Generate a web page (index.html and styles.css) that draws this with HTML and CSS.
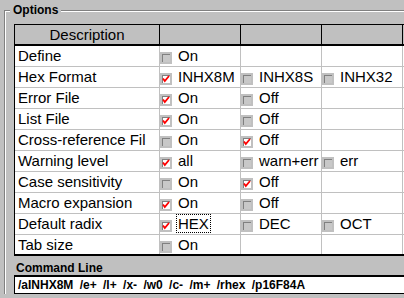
FILE: index.html
```html
<!DOCTYPE html>
<html lang="en">
<head>
    <meta charset="UTF-8">
    <title>Options</title>
    <link rel="stylesheet" href="styles.css">
</head>
<body>
    <div class="group">
        <div class="group-head"><span class="group-title">Options</span></div>
        <div class="group-body">
            <div class="grid-frame">
                <table class="grid">
                    <colgroup>
                        <col class="col-desc"><col class="col-opt"><col class="col-opt"><col class="col-opt"><col class="col-opt">
                    </colgroup>
                    <thead>
                        <tr><th>Description</th><th></th><th></th><th></th><th></th></tr>
                    </thead>
                    <tbody>
                        <tr>
                            <td>Define</td>
                            <td><i class="box"></i>On</td>
                            <td></td><td></td><td></td>
                        </tr>
                        <tr>
                            <td>Hex Format</td>
                            <td><i class="box on"><svg viewBox="0 0 8 8"><polyline points="1,3.5 2.8,6 7,1"/></svg></i>INHX8M</td>
                            <td><i class="box"></i>INHX8S</td>
                            <td><i class="box"></i>INHX32</td>
                            <td></td>
                        </tr>
                        <tr>
                            <td>Error File</td>
                            <td><i class="box on"><svg viewBox="0 0 8 8"><polyline points="1,3.5 2.8,6 7,1"/></svg></i>On</td>
                            <td><i class="box"></i>Off</td>
                            <td></td><td></td>
                        </tr>
                        <tr>
                            <td>List File</td>
                            <td><i class="box on"><svg viewBox="0 0 8 8"><polyline points="1,3.5 2.8,6 7,1"/></svg></i>On</td>
                            <td><i class="box"></i>Off</td>
                            <td></td><td></td>
                        </tr>
                        <tr>
                            <td>Cross-reference Fil</td>
                            <td><i class="box"></i>On</td>
                            <td><i class="box on"><svg viewBox="0 0 8 8"><polyline points="1,3.5 2.8,6 7,1"/></svg></i>Off</td>
                            <td></td><td></td>
                        </tr>
                        <tr>
                            <td>Warning level</td>
                            <td><i class="box on"><svg viewBox="0 0 8 8"><polyline points="1,3.5 2.8,6 7,1"/></svg></i>all</td>
                            <td><i class="box"></i>warn+err</td>
                            <td><i class="box"></i>err</td>
                            <td></td>
                        </tr>
                        <tr>
                            <td>Case sensitivity</td>
                            <td><i class="box"></i>On</td>
                            <td><i class="box on"><svg viewBox="0 0 8 8"><polyline points="1,3.5 2.8,6 7,1"/></svg></i>Off</td>
                            <td></td><td></td>
                        </tr>
                        <tr>
                            <td>Macro expansion</td>
                            <td><i class="box on"><svg viewBox="0 0 8 8"><polyline points="1,3.5 2.8,6 7,1"/></svg></i>On</td>
                            <td><i class="box"></i>Off</td>
                            <td></td><td></td>
                        </tr>
                        <tr>
                            <td>Default radix</td>
                            <td><i class="box on"><svg viewBox="0 0 8 8"><polyline points="1,3.5 2.8,6 7,1"/></svg></i><span class="focus">HEX</span></td>
                            <td><i class="box"></i>DEC</td>
                            <td><i class="box"></i>OCT</td>
                            <td></td>
                        </tr>
                        <tr>
                            <td>Tab size</td>
                            <td><i class="box"></i>On</td>
                            <td></td><td></td><td></td>
                        </tr>
                    </tbody>
                </table>
            </div>

            <div class="cmd-label">Command Line</div>
            <div class="cmd-box">/aINHX8M /e+ /l+ /x- /w0 /c- /m+ /rhex /p16F84A</div>
        </div>
    </div>
</body>
</html>
```

FILE: styles.css
```css
/* General Styles */
html, body {
    overflow: hidden;
}

body {
    margin: 0;
    background: #c0c0c0;
    color: #000;
    font-family: 'Liberation Sans', Arial, sans-serif;
}

/* Group Box */
.group {
    width: 520px;
    margin-left: 4px;
}

.group-head {
    display: flex;
    height: 20px;
}

.group-head::before {
    content: '';
    width: 5px;
    height: 9px;
    align-self: flex-end;
    border-top: 1px solid #808080;
    border-left: 1px solid #808080;
    box-shadow: inset 1px 1px #fff;
}

.group-head::after {
    content: '';
    flex: 1;
    height: 0;
    margin-top: 10px;
    border-top: 1px solid #808080;
    border-bottom: 1px solid #fff;
}

.group-title {
    padding: 3px 3px 0 3px;
    font-size: 12px;
    font-weight: bold;
    line-height: 14px;
}

.group-body {
    border-left: 1px solid #808080;
    box-shadow: inset 1px 0 #fff;
    padding: 4px 0 0 9px;
}

/* Grid */
.grid-frame {
    height: 229px;
    overflow: hidden;
    border: 1px solid #000;
    border-right: none;
    border-bottom-width: 2px;
}

.grid {
    border-collapse: separate;
    border-spacing: 0;
    table-layout: fixed;
    width: 469px;
    font-size: 15px;
}

.col-desc {
    width: 145px;
}

.col-opt {
    width: 81px;
}

.grid th {
    height: 19px;
    padding: 0;
    background: #c0c0c0;
    border-right: 1px solid #000;
    border-bottom: 2px solid #000;
    font-weight: normal;
    line-height: 19px;
}

.grid td {
    height: 20px;
    padding: 0;
    background: #fff;
    border-right: 1px solid #c0c0c0;
    border-bottom: 1px solid #c0c0c0;
    white-space: nowrap;
    line-height: 18px;
    vertical-align: middle;
}

.grid td:first-child {
    padding-left: 3px;
    overflow: hidden;
}

/* Check boxes */
.box {
    display: inline-block;
    position: relative;
    width: 7px;
    height: 7px;
    margin: 0 8px 0 2px;
    border-top: 1px solid #808080;
    border-left: 1px solid #808080;
    background: #c8c8c8;
    box-shadow: 0 0 0 2px #c0c0c0;
    vertical-align: -1px;
}

.box.on {
    background: #fff;
}

.box svg {
    display: block;
    width: 8px;
    height: 8px;
    margin: -1px 0 0 -1px;
    overflow: visible;
}

.box polyline {
    fill: none;
    stroke: #f00;
    stroke-width: 1.8;
}

.focus {
    display: inline-block;
    line-height: 17px;
    padding: 0 1px;
    margin-left: -1px;
    outline: 1px dotted #000;
}

/* Command line */
.cmd-label {
    padding: 6px 0 0 2px;
    font-size: 12px;
    font-weight: bold;
    line-height: 13px;
}

.cmd-box {
    height: 16px;
    padding-left: 3px;
    background: #fff;
    border: 1px solid #000;
    border-top-width: 2px;
    font-size: 12px;
    font-weight: bold;
    line-height: 16px;
    word-spacing: 3px;
    white-space: nowrap;
}
```
